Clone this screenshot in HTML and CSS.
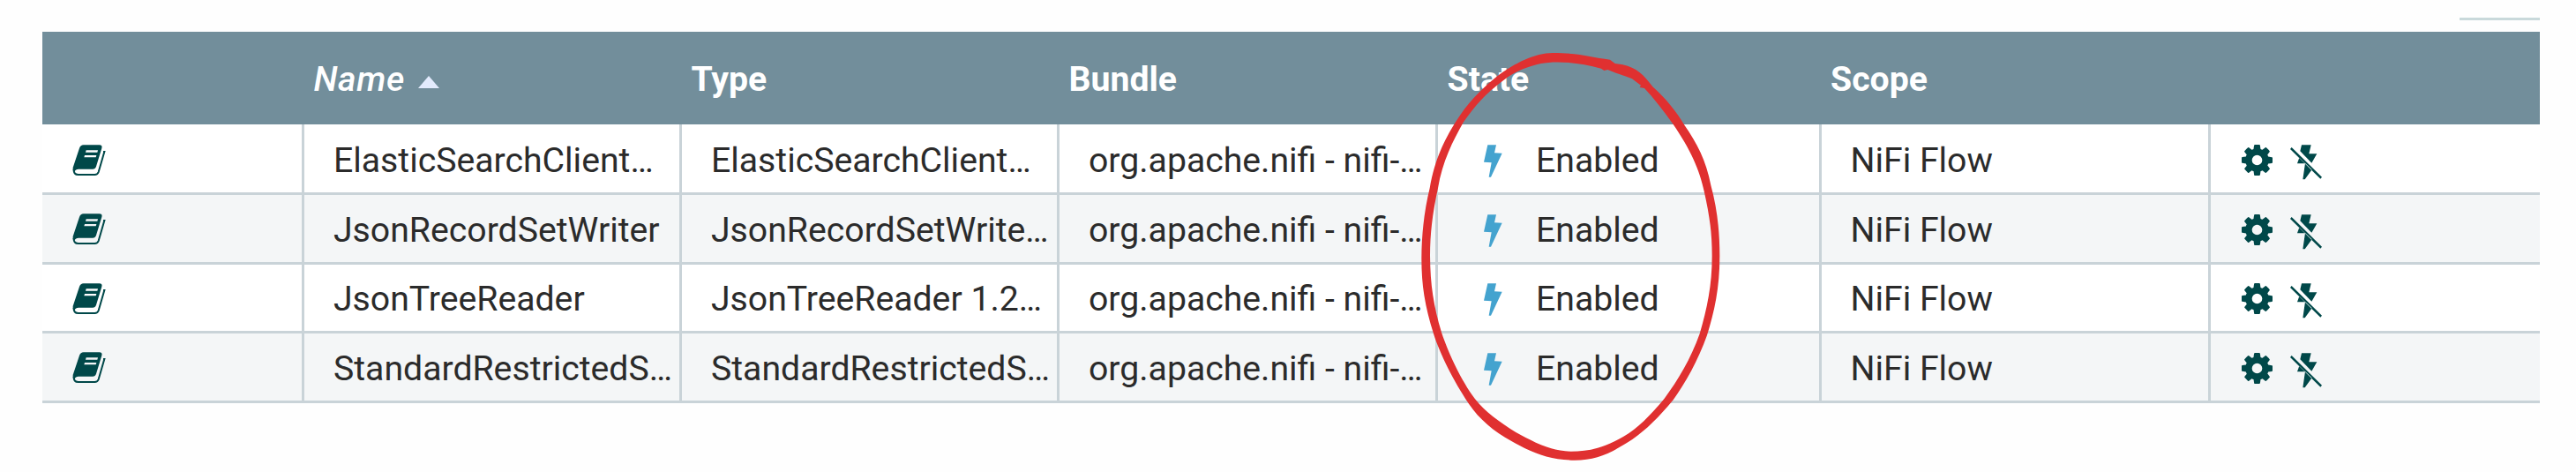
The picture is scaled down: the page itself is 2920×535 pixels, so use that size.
FILE: index.html
```
<!DOCTYPE html>
<html lang="en">
<head>
<meta charset="utf-8">
<title>Controller Services</title>
<link rel="stylesheet" href="styles.css">
</head>
<body>
<svg class="defs" width="0" height="0">
  <symbol id="book" viewBox="16 16 114 108"><path fill-rule="evenodd" d="M54 17H108Q119 17 116 28L97 90Q94 99 85 99H37Q27 99 24 107L18 104V94L40 28Q44 17 54 17ZM63 35 61 42H101L103 35ZM58 52 56 59H96L98 52Z"/><path fill="none" stroke="#004849" stroke-width="6" d="M121 40H125L105 109Q102 118 92 118H36Q20 118 21 100"/></symbol>
  <symbol id="cog" viewBox="128 128 1536 1536"><path d="M1152 896q0-106-75-181t-181-75-181 75-75 181 75 181 181 75 181-75 75-181zm512-109v222q0 12-8 23t-20 13l-185 28q-19 54-39 91 35 50 107 138 10 12 10 25t-9 23q-27 37-99 108t-94 71q-12 0-26-9l-138-108q-44 23-91 38-16 136-29 186-7 28-36 28h-222q-14 0-24.5-8.5t-11.5-21.5l-28-184q-49-16-90-37l-141 107q-10 9-25 9-14 0-25-11-126-114-165-168-7-10-7-23 0-12 8-23 15-21 51-66.5t54-70.5q-27-50-41-99l-183-27q-13-2-21-12.5t-8-23.5v-222q0-12 8-23t19-13l186-28q14-46 39-92-40-57-107-138-10-12-10-24 0-10 9-23 26-36 98.5-107.5t94.5-71.5q13 0 26 10l138 107q44-23 91-38 16-136 29-186 7-28 36-28h222q14 0 24.5 8.5t11.5 21.5l28 184q49 16 90 37l142-107q9-9 24-9 13 0 25 10 129 119 165 170 7 8 7 22 0 12-8 23-15 21-51 66.5t-54 70.5q26 50 41 98l183 28q13 2 21 12.5t8 23.5z"/></symbol>
  <symbol id="bolt" viewBox="66 42 63 111"><path d="M79 43h29l-6 27 26 1-38 81h-7l9-49-26-2z"/></symbol>
  <symbol id="bolt-off" viewBox="198 42 108 120"><path d="M237 43h32l-7 30 27 0-18 31-39-40zM229 86l-7 20h27zM249 105l-8 55h7l24-33zM198 57l5-6 103 101-5 6z"/></symbol>
</svg>
<div class="page">
  <div class="toolbar"><div class="button-edge"></div></div>
  <div class="table">
    <div class="row header">
      <div></div>
      <div class="sorted">Name<svg class="sort" viewBox="0 0 24 14"><path d="M12 0 24 14H0z"/></svg></div>
      <div>Type</div>
      <div>Bundle</div>
      <div>State</div>
      <div>Scope</div>
      <div></div>
    </div>
    <div class="row first">
      <div class="cell"><svg class="book"><use href="#book"/></svg></div>
      <div class="cell">ElasticSearchClient…</div>
      <div class="cell">ElasticSearchClient…</div>
      <div class="cell">org.apache.nifi - nifi-…</div>
      <div class="cell state"><svg class="bolt"><use href="#bolt"/></svg>Enabled</div>
      <div class="cell">NiFi Flow</div>
      <div class="cell"><svg class="cog"><use href="#cog"/></svg><svg class="bolt-off"><use href="#bolt-off"/></svg></div>
    </div>
    <div class="row">
      <div class="cell"><svg class="book"><use href="#book"/></svg></div>
      <div class="cell">JsonRecordSetWriter</div>
      <div class="cell">JsonRecordSetWrite…</div>
      <div class="cell">org.apache.nifi - nifi-…</div>
      <div class="cell state"><svg class="bolt"><use href="#bolt"/></svg>Enabled</div>
      <div class="cell">NiFi Flow</div>
      <div class="cell"><svg class="cog"><use href="#cog"/></svg><svg class="bolt-off"><use href="#bolt-off"/></svg></div>
    </div>
    <div class="row">
      <div class="cell"><svg class="book"><use href="#book"/></svg></div>
      <div class="cell">JsonTreeReader</div>
      <div class="cell">JsonTreeReader 1.2…</div>
      <div class="cell">org.apache.nifi - nifi-…</div>
      <div class="cell state"><svg class="bolt"><use href="#bolt"/></svg>Enabled</div>
      <div class="cell">NiFi Flow</div>
      <div class="cell"><svg class="cog"><use href="#cog"/></svg><svg class="bolt-off"><use href="#bolt-off"/></svg></div>
    </div>
    <div class="row">
      <div class="cell"><svg class="book"><use href="#book"/></svg></div>
      <div class="cell">StandardRestrictedS…</div>
      <div class="cell">StandardRestrictedS…</div>
      <div class="cell">org.apache.nifi - nifi-…</div>
      <div class="cell state"><svg class="bolt"><use href="#bolt"/></svg>Enabled</div>
      <div class="cell">NiFi Flow</div>
      <div class="cell"><svg class="cog"><use href="#cog"/></svg><svg class="bolt-off"><use href="#bolt-off"/></svg></div>
    </div>
  </div>
  <svg class="marker" viewBox="0 0 1500 1515"><path fill-rule="evenodd" d="M600 90C690 90 730 104 795 113L812 126 838 130C885 140 910 165 940 205C990 250 1020 290 1048 335C1090 395 1122 455 1138 540C1160 620 1168 700 1168 780C1168 890 1150 970 1125 1050C1095 1135 1050 1215 1010 1270C960 1330 920 1370 870 1405C800 1450 750 1475 675 1475C590 1475 530 1450 460 1410C400 1377 350 1335 315 1283C265 1210 215 1110 195 1045C165 950 154 880 154 790C154 700 165 620 182 550C200 450 230 390 270 325C310 260 350 220 410 170C470 125 540 90 600 90ZM560 126C600 118 680 118 765 143L775 150 787 147C830 165 850 168 870 178L900 200 896 207 912 210C945 245 975 285 1008 330C1070 420 1100 490 1115 560C1133 640 1142 700 1142 780C1142 880 1125 960 1100 1045C1070 1130 1025 1205 980 1265C930 1325 890 1365 840 1395C780 1430 730 1445 660 1445C590 1443 530 1410 475 1380C420 1345 370 1310 335 1265C290 1205 245 1110 222 1040C195 950 184 880 183 780C183 690 195 620 210 550C225 460 260 390 297 325C340 265 370 230 430 185C475 150 520 135 560 126Z"/></svg>
</div>
</body>
</html>
```
FILE: styles.css
```
body {
  margin: 0;
  background: #fefefe;
  font-family: Roboto, sans-serif;
  font-size: 39.2px;
  color: #2b2b2b;
}
.defs { display: block; }
.page {
  position: relative;
  box-sizing: border-box;
  height: 535px;
  padding: 20px 41.5px 0 48px;
  overflow: hidden;
}
.toolbar {
  display: flex;
  justify-content: flex-end;
  height: 16px;
}
.button-edge {
  width: 91px;
  height: 3px;
  background: #c9d9db;
}
.row {
  display: grid;
  grid-template-columns: 297px 428px 428px 429px 434.5px 441.5px 1fr;
  box-sizing: border-box;
  height: 78.5px;
  border-bottom: 3px solid #c9d3d8;
  background: #fff;
  white-space: nowrap;
}
.row:nth-child(odd) { background: #f4f6f7; }
.row.first { height: 80px; }
.row.header {
  height: 105px;
  border: 0;
  background: #728e9b;
  color: #fff;
  font-weight: 700;
  line-height: 109px;
}
.header > div { height: 105px; padding-left: 10.5px; }
.header > .sorted { font-style: italic; font-weight: 500; letter-spacing: 0.6px; }
.sort {
  width: 24px;
  height: 14px;
  margin-left: 15px;
  vertical-align: 3px;
  fill: #e3ebfd;
}
.cell {
  display: flex;
  align-items: center;
  box-sizing: border-box;
  padding: 3.5px 0 0 33px;
  border-right: 3px solid #c9d3d8;
  line-height: 70px;
}
.first .cell { padding-top: 5px; }
.cell:first-child { padding-left: 33.5px; }
.cell:last-child { padding-left: 35px; border-right: 0; }
.cell svg { flex: none; fill: #004849; }
.book { width: 38px; height: 36px; margin-top: -1px; }
.cog { width: 35px; height: 35px; margin-top: -1px; }
.bolt-off { width: 36px; height: 40px; margin: 4px 0 0 20px; }
.cell .bolt { width: 21px; height: 37px; margin: 1px 38px 0 19px; fill: #44a3cf; }
.marker {
  position: absolute;
  left: 1560px;
  top: 30px;
  width: 500px;
  height: 505px;
  fill: #e03030;
}
```
